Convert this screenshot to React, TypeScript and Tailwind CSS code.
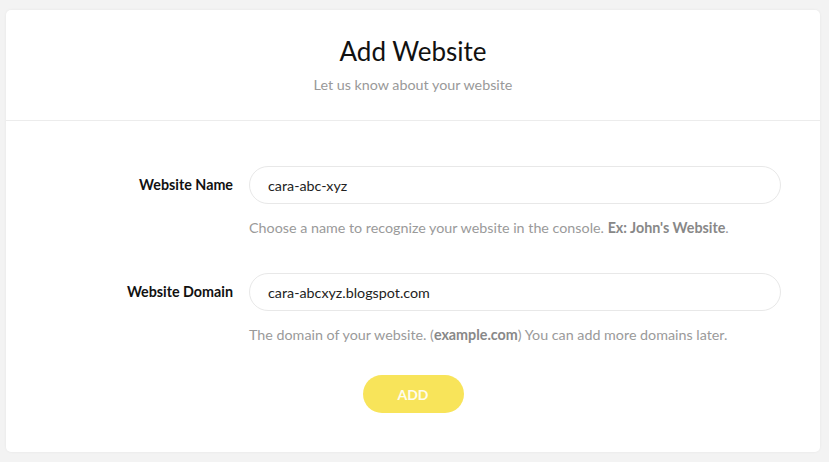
export default function App() {
  const font = { fontFamily: 'Lato, "Noto Sans", sans-serif' };
  return (
    <div className="min-h-screen bg-[#f3f3f3] pl-[6px] pr-[9px] pt-[10px] pb-[10px]" style={font}>
      <div className="w-[814px] rounded-[5px] bg-white shadow-[0_0_3px_rgba(0,0,0,0.06)]">
        {/* header */}
        <div className="flex h-[111px] flex-col items-center border-b border-[#ececec] pt-[23px]">
          <h1 className="text-[26px] leading-[36px] text-[#111]">Add Website</h1>
          <p className="mt-[6px] text-[14.3px] leading-[20px] text-[#999]">Let us know about your website</p>
        </div>

        {/* form */}
        <div className="pt-[45px] pr-[39px] pb-[39px]">
          <div className="grid grid-cols-[227px_1fr] gap-x-4">
            <label className="flex h-[38px] items-center justify-end text-[14.3px] font-bold text-[#111]">
              Website Name
            </label>
            <div>
              <input
                defaultValue="cara-abc-xyz"
                className="h-[38px] w-full rounded-full border border-[#e8e8e8] px-[18px] text-[14.3px] text-[#222] outline-none"
                style={font}
              />
              <p className="mt-[14px] text-[14.3px] leading-[20px] text-[#9a9a9a]">
                Choose a name to recognize your website in the console.{' '}
                <b className="text-[#888]">Ex: John's Website</b>.
              </p>
            </div>

            <label className="mt-[35px] flex h-[38px] items-center justify-end text-[14.3px] font-bold text-[#111]">
              Website Domain
            </label>
            <div className="mt-[35px]">
              <input
                defaultValue="cara-abcxyz.blogspot.com"
                className="h-[38px] w-full rounded-full border border-[#e8e8e8] px-[18px] text-[14.3px] text-[#222] outline-none"
                style={font}
              />
              <p className="mt-[14px] text-[14.3px] leading-[20px] text-[#9a9a9a]">
                The domain of your website. (<b className="text-[#888]">example.com</b>) You can add more domains later.
              </p>
            </div>
          </div>

          <div className="mt-[30px] flex justify-center pl-[39px]">
            <button className="h-[38px] w-[101px] rounded-full bg-[#f8e45a] text-[14px] font-bold text-white/90" style={font}>
              ADD
            </button>
          </div>
        </div>
      </div>
    </div>
  );
}
